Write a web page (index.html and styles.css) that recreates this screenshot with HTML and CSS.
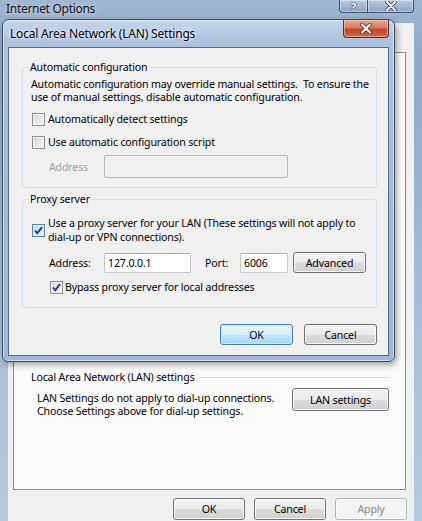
FILE: index.html
```html
<!DOCTYPE html>
<html lang="en">
<head>
  <meta charset="UTF-8" />
  <title>Local Area Network (LAN) Settings</title>
  <link rel="stylesheet" href="styles.css">
</head>
<body>
  <div class="window">
    <div class="titlebar">
      <span class="title">Internet Options</span>
      <div class="caption">
        <span class="cap help">?</span>
        <span class="cap close">
          <svg width="14" height="10" viewBox="0 0 14 10"><path d="M3 1 L11 9 M11 1 L3 9" stroke="#2d3e57" stroke-width="3.6" stroke-linecap="round"/><path d="M3 1 L11 9 M11 1 L3 9" stroke="#fff" stroke-width="2" stroke-linecap="round"/></svg>
        </span>
      </div>
    </div>

    <div class="client">
      <div class="tabs"></div>
      <div class="panel">
        <div class="lan-section">
          <div class="section-head"><span>Local Area Network (LAN) settings</span><span class="rule"></span></div>
          <div class="lan-row">
            <p>LAN Settings do not apply to dial-up connections.<br>Choose Settings above for dial-up settings.</p>
            <button class="btn lan-btn">LAN settings</button>
          </div>
        </div>
      </div>
      <div class="actions">
        <button class="btn wide">OK</button>
        <button class="btn wide">Cancel</button>
        <button class="btn wide" disabled>Apply</button>
      </div>
    </div>

    <!-- modal dialog on top of Internet Options -->
    <div class="dialog">
      <div class="dlg-title">Local Area Network (LAN) Settings</div>
      <span class="dlg-close">
        <svg width="16" height="11" viewBox="0 0 16 11"><path d="M4 1.5 L12 9.5 M12 1.5 L4 9.5" stroke="#5a2418" stroke-width="3.8" stroke-linecap="round"/><path d="M4 1.5 L12 9.5 M12 1.5 L4 9.5" stroke="#fff" stroke-width="2.2" stroke-linecap="round"/></svg>
      </span>
      <div class="dlg-body">
        <fieldset class="group group-auto">
          <legend>Automatic configuration</legend>
          <p class="note">Automatic configuration may override manual settings.&nbsp; To ensure the<br>use of manual settings, disable automatic configuration.</p>
          <label class="check first"><span class="box"></span>Automatically detect settings</label>
          <label class="check second"><span class="box"></span>Use automatic configuration script</label>
          <div class="field-row script-row">
            <span class="field-label muted">Address</span>
            <span class="input script-input"></span>
          </div>
        </fieldset>

        <fieldset class="group group-proxy">
          <legend>Proxy server</legend>
          <label class="check multi">
            <span class="box checked focus"><svg width="11" height="11" viewBox="0 0 11 11"><path d="M2 5.5 L4.3 8.3 L9 2.2" fill="none" stroke="#21348a" stroke-width="1.9"/></svg></span>
            <span>Use a proxy server for your LAN (These settings will not apply to<br>dial-up or VPN connections).</span>
          </label>
          <div class="field-row proxy-row">
            <span class="field-label">Address:</span>
            <span class="input addr-input">127.0.0.1</span>
            <span class="port-label">Port:</span>
            <span class="input port-input">6006</span>
            <button class="btn adv-btn">Advanced</button>
          </div>
          <label class="check bypass">
            <span class="box checked"><svg width="11" height="11" viewBox="0 0 11 11"><path d="M2 5.5 L4.3 8.3 L9 2.2" fill="none" stroke="#21348a" stroke-width="1.9"/></svg></span>
            Bypass proxy server for local addresses
          </label>
        </fieldset>

        <div class="dlg-actions">
          <button class="btn wide default">OK</button>
          <button class="btn wide">Cancel</button>
        </div>
      </div>
    </div>
  </div>
</body>
</html>
```

FILE: styles.css
```css
* {
  box-sizing: border-box;
}
body {
  margin: 0;
  font-family: "Noto Sans", "Open Sans", sans-serif;
  font-size: 10.6px;
  letter-spacing: -0.15px;
  color: #000;
  background: #fff;
}
p {
  margin: 0;
}

/* parent window: Internet Options */
.window {
  position: relative;
  width: 422px;
  height: 521px;
  overflow: hidden;
  display: flex;
  flex-direction: column;
  background: linear-gradient(180deg, #9fb6d1 0, #8ea9c9 60px, #a6bcd6 300px, #b7c9de 521px);
}
.titlebar {
  height: 23px;
  flex: none;
  display: flex;
  align-items: flex-start;
}
.title {
  padding-left: 6px;
  font-size: 12px;
  letter-spacing: -0.3px;
  line-height: 18px;
  color: #111;
  text-shadow: 0 0 5px rgba(255, 255, 255, 0.8);
}
.caption {
  display: flex;
  margin-left: auto;
  margin-right: 8px;
}
.cap {
  height: 13px;
  display: flex;
  align-items: center;
  justify-content: center;
  border: 1px solid #3d5270;
  border-top: none;
  background: linear-gradient(180deg, rgba(255, 255, 255, 0.3), rgba(110, 140, 185, 0.4));
  box-shadow: inset 0 0 0 1px rgba(255, 255, 255, 0.4);
}
.help {
  width: 29px;
  border-radius: 0 0 0 4px;
  color: #fff;
  font-weight: bold;
  font-size: 11px;
  line-height: 11px;
  text-shadow: 0 0 2px #1e2c44, 0 0 1px #1e2c44;
}
.close {
  width: 46px;
  border-left: none;
  border-radius: 0 0 4px 0;
}

.client {
  flex: 1;
  margin: 0 8px;
  background: #f0f0f0;
  display: flex;
  flex-direction: column;
}
.tabs {
  height: 29px;
  flex: none;
}
.panel {
  height: 438px;
  flex: none;
  margin: 0 8px 0 5px;
  border: 1px solid #898c95;
  background: #fbfbfb;
  display: flex;
  flex-direction: column;
  padding: 0 17px 71px 17px;
}
.lan-section {
  margin-top: auto;
}
.section-head {
  display: flex;
  align-items: center;
  line-height: 15px;
}
.rule {
  flex: 1;
  height: 1px;
  margin-left: 4px;
  background: #d5dfe5;
}
.lan-row {
  display: flex;
  justify-content: space-between;
  align-items: flex-start;
  margin-top: 3px;
}
.lan-row p {
  padding: 4px 0 0 6px;
  line-height: 13px;
  white-space: nowrap;
}
.actions {
  display: flex;
  justify-content: flex-end;
  gap: 9px;
  padding: 8px 7px 0 0;
}

/* buttons */
.btn {
  font: inherit;
  letter-spacing: inherit;
  color: #000;
  height: 21px;
  padding: 0;
  border: 1px solid #707070;
  border-radius: 3px;
  background: linear-gradient(180deg, #f2f2f2 0, #ebebeb 50%, #dddddd 50%, #cfcfcf 100%);
  box-shadow: inset 0 0 0 1px #fbfbfb;
}
.btn.wide {
  width: 73px;
}
.actions .btn {
  width: 72px;
  height: 22px;
}
.btn:disabled {
  color: #8a8a8a;
  border-color: #adb2b5;
  background: #f4f4f4;
}
.btn.default {
  border-color: #3c7fb1;
  background: linear-gradient(180deg, #eaf6fd 0, #d9f0fc 50%, #bee6fd 50%, #a7d9f5 100%);
  box-shadow: inset 0 0 0 1px #c4e9fb;
}
.lan-btn {
  width: 97px;
  height: 23px;
  margin-right: -1px;
}

/* modal dialog */
.dialog {
  position: absolute;
  left: 2px;
  top: 19px;
  width: 393px;
  height: 343px;
  padding: 0 5px 5px 5px;
  border: 1px solid #34495f;
  border-radius: 7px 7px 6px 6px;
  background: linear-gradient(180deg, #c4d6ec 0, #adc3df 20px, #a3bbd9 120px, #9fb7d6 343px);
  box-shadow: inset 0 0 0 1px rgba(255, 255, 255, 0.55), 2px 3px 6px rgba(0, 0, 0, 0.35);
}
.dlg-title {
  height: 27px;
  line-height: 27px;
  padding-left: 2px;
  font-size: 12px;
  letter-spacing: -0.2px;
  text-shadow: 0 0 6px #fff, 0 0 3px rgba(255, 255, 255, 0.9);
}
.dlg-close {
  position: absolute;
  top: 0;
  right: 5px;
  width: 46px;
  height: 18px;
  display: flex;
  align-items: center;
  justify-content: center;
  border: 1px solid #5d2b20;
  border-top: none;
  border-radius: 0 0 4px 4px;
  background: linear-gradient(180deg, #e9a891 0, #d87b5f 45%, #c2452a 55%, #d56a44 100%);
  box-shadow: inset 0 0 0 1px rgba(255, 220, 200, 0.5);
}
.dlg-body {
  height: 309px;
  border: 1px solid #56697f;
  background: #f0f0f0;
  padding: 12px 11px 0 13px;
}

.group {
  margin: 0;
  min-width: 0;
  padding: 0 2px 0 6px;
  border: 1px solid #d5dfe5;
  border-radius: 3px;
}
.group legend {
  padding: 0 1px;
  line-height: 15px;
}
.group-auto {
  padding-bottom: 9px;
}
.group-proxy {
  margin-top: 4px;
  padding-bottom: 12px;
}
.note {
  margin: 3px 0 0 2px;
  line-height: 13px;
  white-space: nowrap;
}

.check {
  display: flex;
  align-items: center;
  gap: 3px;
  line-height: 15px;
  margin-left: 3px;
  white-space: nowrap;
}
.check.first {
  margin-top: 8px;
}
.check.second {
  margin-top: 8px;
}
.check.multi {
  align-items: flex-start;
  line-height: 14px;
  margin-top: 9px;
}
.check.multi .box {
  margin-top: 8px;
}
.check.bypass {
  margin: 7px 0 0 21px;
  gap: 2px;
}
.box {
  width: 13px;
  height: 13px;
  flex: none;
  display: flex;
  align-items: center;
  justify-content: center;
  border: 1px solid #8e8f8f;
  background: linear-gradient(135deg, #d6d6d6, #f7f7f7);
  box-shadow: inset 0 0 0 1px #f2f2f2;
}
.box.focus {
  border-color: #5586a3;
  background: linear-gradient(135deg, #bcdcf0, #eaf6fd);
  box-shadow: inset 0 0 0 1px #def1fc;
}

.field-row {
  display: flex;
  align-items: center;
  margin-left: 20px;
}
.script-row {
  margin-top: 5px;
}
.proxy-row {
  margin-top: 8px;
}
.field-label {
  width: 55px;
}
.muted {
  color: #9d9d9d;
}
.input {
  height: 20px;
  line-height: 18px;
  padding-left: 3px;
  border: 1px solid #c5c8ce;
  border-top-color: #a9abb2;
  border-radius: 2px;
  background: #fff;
}
.script-input {
  width: 184px;
  height: 23px;
  background: #f0f0f0;
  border-color: #b9b9b9;
}
.addr-input {
  width: 87px;
}
.port-label {
  width: 35px;
  margin-left: 14px;
}
.port-input {
  width: 48px;
}
.adv-btn {
  width: 73px;
  margin-left: 5px;
}

.dlg-actions {
  display: flex;
  justify-content: flex-end;
  gap: 11px;
  margin-top: 16px;
}
```
